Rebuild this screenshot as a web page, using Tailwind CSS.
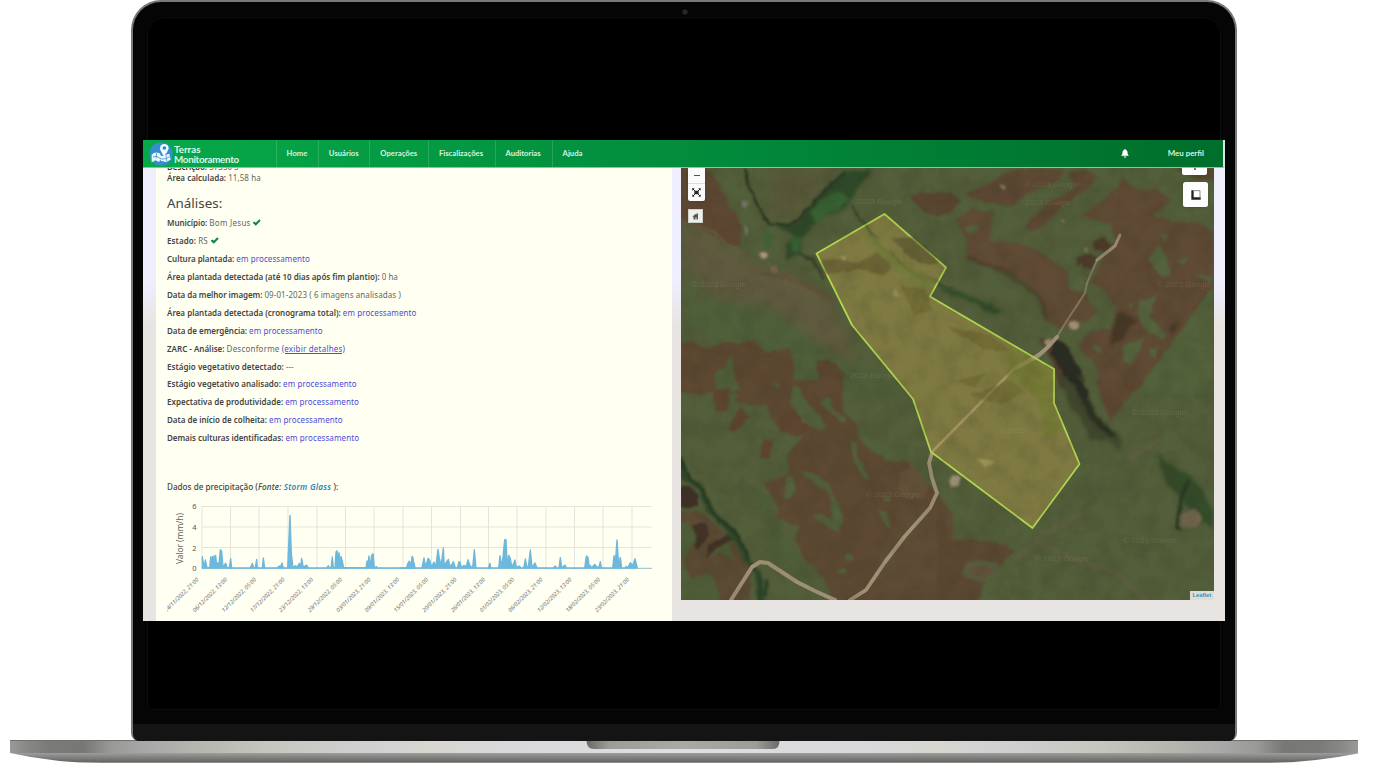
<!DOCTYPE html>
<html lang="pt-BR">
<head>
<meta charset="utf-8">
<title>Terras Monitoramento</title>
<script src="https://cdn.jsdelivr.net/npm/@tailwindcss/browser@4"></script>
</head>
<body class="bg-white">
<div class="flex h-[769px] w-[1373px] flex-col overflow-hidden">
  <!-- laptop lid -->
  <div class="relative ml-[131px] h-[741px] w-[1105.5px] shrink-0 overflow-hidden rounded-t-[30px] rounded-b-[8px] border-x-2 border-t-2 border-[#777977] bg-[#050505]">
    <div class="absolute top-[15px] left-[14px] h-[693px] w-[1074px] rounded-t-[18px] rounded-b-[5px] border border-[#0d0d0d] bg-black"></div>
    <div class="absolute top-[7px] left-[549px] size-[6px] rounded-full border border-[#1a1c1e] bg-[#26292b]"></div>
    <div class="absolute bottom-0 left-0 h-[17px] w-full bg-[#141414]"></div>

    <!-- application screen -->
    <div class="relative mt-[138px] ml-[10px] flex h-[481px] w-[1082px] flex-col overflow-hidden bg-[#e8e4e1]">
      <nav class="flex h-[28px] shrink-0 items-stretch border-r-2 border-b border-r-[#d9e5da] border-b-[#8ac69b] bg-linear-to-r from-[#06a949] via-[#028c3c] to-[#006e2c] text-[7.7px] font-bold text-[#d8f2e0]" style="font-family:Lato,'Liberation Sans',sans-serif">
        <div class="flex w-[132.5px] items-center">
          <svg class="ml-[5.5px] h-[24px] w-[24px] shrink-0" viewBox="0 0 72 72">
            <circle cx="36" cy="36" r="35" fill="#368dcc"/>
            <path d="M8 38q10-10 24-4l6 12-8 14-10-5-12 6z M35 43l12-3 14-5 4 18-14 7-16-4z" fill="#e9fbff"/>
            <path d="M12 45q10-6 20 3 12 8 30-4M23 33l-2 16M51 40l2 17" fill="none" stroke="#4395c6" stroke-width="2.500"/>
            <path d="M45 43Q34 28 33 19a13 13 0 0 1 26 0Q57 30 45 43z" fill="#f2fcff"/>
            <circle cx="46" cy="18" r="5.500" fill="#278cc5"/>
          </svg>
          <div class="ml-[1.5px] text-[9.8px] leading-[10px] font-bold text-[#dcf8e8]"><div>Terras</div><div class="tracking-[-0.03em]">Monitoramento</div></div>
        </div>
        <div class="flex w-[42px] items-center justify-center border-l border-white/15">Home</div>
        <div class="flex w-[51.5px] items-center justify-center border-l border-white/15">Usuários</div>
        <div class="flex w-[58.5px] items-center justify-center border-l border-white/15">Operações</div>
        <div class="flex w-[67px] items-center justify-center border-l border-white/15 pr-px">Fiscalizações</div>
        <div class="flex w-[57px] items-center justify-center border-l border-white/15 pr-px">Auditorias</div>
        <div class="flex w-[41px] items-center justify-center border-l border-white/15">Ajuda</div>
        <div class="ml-auto flex items-center pr-[19px]">
          <svg class="mr-[39px] h-[9px] w-[8px]" viewBox="0 0 24 28" fill="#fff"><path d="M12 0c2 0 2 2 2 2 5 1 6 5 6 10 0 5 2 6 4 9H0c2-3 4-4 4-9C4 7 5 3 10 2c0 0 0-2 2-2zM8 23h8c0 5-8 5-8 0z"/></svg>
          <span class="text-[7.9px]">Meu perfil</span>
        </div>
      </nav>

      <main class="flex min-h-0 flex-1 items-stretch bg-linear-to-b from-[#eeeeff] from-25% to-[#e8e4e1] to-35%">
        <div class="w-[13px] shrink-0"></div>
        <section class="w-[516px] shrink-0 overflow-hidden bg-[#fffff2] pl-[11px] text-[8px] text-[#666]" style="font-family:'Noto Sans','Open Sans',sans-serif">
          <div class="-mt-[7px] h-[8px] leading-[12px] font-semibold whitespace-nowrap text-[#333]">Descrição: <span class="font-normal text-[#626262]">57350 S</span></div>
          <div class="h-[18px] leading-[18px]"><b class="font-semibold text-[#444]">Área calculada:</b> <span class="tracking-[0.01em]">11,58 ha</span></div>
          <h2 class="h-[27px] pt-[3px] text-[13.4px] leading-[26px] text-[#444]">Análises:</h2>
          <div class="flex flex-col whitespace-nowrap [&_b]:font-semibold [&_b]:text-[#444] [&_i]:tracking-[0.012em] [&_i]:text-[#4b4bd8] [&_i]:not-italic [&>div]:h-[17.95px] [&>div]:leading-[18.4px]">
            <div><b class="tracking-[-0.005em]">Município:</b> <span class="tracking-[0.035em]">Bom Jesus</span> <svg class="-ml-px inline h-[7px] w-[9px] -translate-y-px" viewBox="0 0 24 20"><path d="M1 11l5-4 4 4L20 1l4 4-14 14z" fill="#15803f"/></svg></div>
            <div><b class="tracking-[0.01em]">Estado:</b> <span>RS</span> <svg class="inline h-[7px] w-[9px] -translate-y-px" viewBox="0 0 24 20"><path d="M1 11l5-4 4 4L20 1l4 4-14 14z" fill="#15803f"/></svg></div>
            <div><b class="tracking-[-0.004em]">Cultura plantada:</b> <i>em processamento</i></div>
            <div><b>Área plantada detectada (até 10 dias após fim plantio):</b> <span>0 ha</span></div>
            <div><b class="tracking-[-0.008em]">Data da melhor imagem:</b> <span class="tracking-[0.011em]">09-01-2023 ( 6 imagens analisadas )</span></div>
            <div><b>Área plantada detectada (cronograma total):</b> <i>em processamento</i></div>
            <div><b class="tracking-[-0.005em]">Data de emergência:</b> <i>em processamento</i></div>
            <div><b>ZARC - Análise:</b> <span class="tracking-[0.026em]">Desconforme</span> <i class="!tracking-[0.026em] underline">(exibir detalhes)</i></div>
            <div><b class="tracking-[0.004em]">Estágio vegetativo detectado:</b> <span>---</span></div>
            <div><b>Estágio vegetativo analisado:</b> <i>em processamento</i></div>
            <div><b>Expectativa de produtividade:</b> <i>em processamento</i></div>
            <div><b class="tracking-[-0.002em]">Data de início de colheita:</b> <i>em processamento</i></div>
            <div><b class="tracking-[-0.004em]">Demais culturas identificadas:</b> <i>em processamento</i></div>
          </div>
          <div class="mt-[30px] h-[18px] text-[8.15px] leading-[19px] font-medium whitespace-nowrap text-[#444]">Dados de precipitação (<em class="tracking-[0.02em]">Fonte: <span class="font-semibold tracking-[0.03em] text-[#3286b5]">Storm Glass</span></em> ):</div>
          <svg class="block h-[126px] w-[505px]" viewBox="167 495 505 126" font-family="'Noto Sans',sans-serif">
            <path d="M202 506.500H652M202 527H652M202 547.500H652M202 506v64M230.500 506v64M259 506v64M288 506v64M317 506v64M345.500 506v64M374 506v64M403 506v64M431.500 506v64M460.500 506v64M488.500 506v64M517 506v64M546 506v64M574.500 506v64M603 506v64M632 506v64" fill="none" stroke="#deded3" stroke-width=".8"/>
            <path d="M202 568.300H652" stroke="#8fbdcc" stroke-width="1"/>
            <g font-size="7.500" fill="#555" text-anchor="end"><text x="196.500" y="509">6</text><text x="196.500" y="530">4</text><text x="196.500" y="550.500">2</text><text x="196.500" y="571">0</text></g>
            <text transform="translate(182.500 538.500) rotate(-90)" font-size="8.500" fill="#666" text-anchor="middle" textLength="51">Valor (mm/h)</text>
            <g fill="#6db8dc" stroke="#6db8dc" stroke-width="4" stroke-linejoin="round">
              <path transform="translate(140 470) scale(.33333)" d="M187 294V260L192 292 196 270 201 293H209L212 261 215 285 217 259 220 290 222 257 224 287 227 256 230 288 233 278 236 292 241 239 245 244 249 293 257 279 261 293H268L272 266 275 294H331L337 280 341 293H346L350 268 352 294H367L370 264 374 294H410L418 288 421 292 426 279 430 294H443L450 136 454 250 459 293 466 287 470 292 478 280 482 290 485 265 490 292 500 285 505 294H560L565 287 568 294H573L577 261 580 294H585L588 246 591 242 595 270 597 248 600 280 603 259 606 270 611 293H678L681 273 684 282 687 258 691 289 695 256 699 251 703 293 710 290V294H800L803 282 808 274 812 291 817 259 825 294z"/>
              <path transform="translate(400 470) scale(.33333)" d="M0 294H20L27 274 31 290 37 259 44 294H66L72 264 77 291 84 265 89 270 94 291 102 276 107 291 114 238 119 270 123 285 126 266 130 234 133 290 138 278 145 268 151 292 160 275 166 293 173 292 176 276 180 276 184 293 192 286 198 291 204 269 211 289 218 292 223 239 228 294H265L270 280 272 294H296L300 257 306 292 314 209 318 209 322 292 326 256 331 266 336 292 345 270 349 292 358 288 363 294H371L376 267 381 292 385 290 391 240 396 292 405 279 411 294H460L466 288 470 294H477L481 263 485 293 495 285 499 294H554L559 258 564 262 568 291 571 286 574 294 584 283 592 292 597 290 601 275 604 294H638L642 257 646 280 651 210 656 285 661 262 665 294H675L679 289 683 294 691 278 698 287 705 266 712 294z"/>
            </g>
            <g font-size="5.700" font-style="italic" fill="#6c6c6c" text-anchor="end">
              <text transform="translate(199 580) rotate(-45)">14/11/2022, 21:00</text><text transform="translate(227.500 580) rotate(-45)">06/12/2022, 13:00</text><text transform="translate(256.500 580) rotate(-45)">12/12/2022, 05:00</text><text transform="translate(285 580) rotate(-45)">17/12/2022, 21:00</text><text transform="translate(313.500 580) rotate(-45)">23/12/2022, 13:00</text><text transform="translate(342.500 580) rotate(-45)">29/12/2022, 05:00</text><text transform="translate(371 580) rotate(-45)">03/01/2023, 21:00</text><text transform="translate(399.500 580) rotate(-45)">09/01/2023, 13:00</text><text transform="translate(428.500 580) rotate(-45)">15/01/2023, 05:00</text><text transform="translate(457 580) rotate(-45)">20/01/2023, 21:00</text><text transform="translate(485.500 580) rotate(-45)">26/01/2023, 13:00</text><text transform="translate(514.500 580) rotate(-45)">01/02/2023, 05:00</text><text transform="translate(543 580) rotate(-45)">06/02/2023, 21:00</text><text transform="translate(572 580) rotate(-45)">12/02/2023, 13:00</text><text transform="translate(600.500 580) rotate(-45)">18/02/2023, 05:00</text><text transform="translate(629.500 580) rotate(-45)">23/02/2023, 21:00</text>
            </g>
          </svg>
        </section>

        <section class="relative ml-[9px] h-[432px] w-[533px] shrink-0 overflow-hidden bg-[#505d38]">
          <svg class="block h-full w-full" viewBox="681 168 533 432" preserveAspectRatio="none">
            <defs>
              <filter id="soft" x="-5%" y="-5%" width="110%" height="110%" color-interpolation-filters="sRGB"><feTurbulence type="fractalNoise" baseFrequency=".09" numOctaves="3" seed="4" result="n"/><feDisplacementMap in="SourceGraphic" in2="n" scale="5" xChannelSelector="R" yChannelSelector="G"/><feGaussianBlur stdDeviation=".8"/></filter>
              <filter id="grain" x="0" y="0" width="100%" height="100%" color-interpolation-filters="sRGB"><feTurbulence type="fractalNoise" baseFrequency=".05" numOctaves="5" seed="9"/><feColorMatrix values="0 0 0 0 .18  0 0 0 0 .17  0 0 0 0 .1  1.600 0 0 0 -.62"/></filter>
              <filter id="haze" color-interpolation-filters="sRGB"><feGaussianBlur stdDeviation="14"/></filter>
              <filter id="river" x="-20%" y="-20%" width="140%" height="140%" color-interpolation-filters="sRGB"><feGaussianBlur stdDeviation="5"/></filter>
            </defs>
            <rect x="681" y="168" width="533" height="432" fill="#535e3a"/>
            <g filter="url(#soft)">
              <g transform="translate(670 160) scale(.33333)">
                <g filter="url(#haze)">
                  <path d="M30 170L240 300 480 420 560 600 420 560 120 400 30 300z" fill="#605b40"/>
                  <path d="M30 400L300 440 520 600 700 700H400L30 500z" fill="#4f5f3a"/>
                  <path d="M300 30H500L400 170 300 180z" fill="#58593a"/>
                </g>
                <path d="M30 20H105L145 70 165 110 210 190 213 262 180 255 90 205 30 170z" fill="#5e4833"/>
                <path d="M720 108L760 100H850V160L810 168 760 155z" fill="#5a4632"/>
                <path d="M30 545L70 545 105 570 165 545 200 550 250 540 285 575 360 562 372 620 375 700H30z" fill="#5d4832"/>
                <path d="M135 700L135 640 165 620 185 585 192 610 188 640 210 690z" fill="#4f5e38"/>
                <path d="M440 700L445 605 470 598 500 612 522 640 520 700z" fill="#5b4731"/>
                <path d="M265 520L330 495 400 535 360 562 285 575z" fill="#50603b"/>
                <g filter="url(#river)">
                  <path d="M300 190L360 198 400 165 430 120 470 80 520 30H610L560 90 530 145 440 180 395 240 388 280 350 300 345 260 370 230 350 210 310 195" fill="#2f4829"/>
                  <path d="M420 150L460 115 520 90 540 120 500 150 430 185z M365 225L395 235 380 275 360 270z M285 210L305 225 300 265 285 260z" fill="#386232"/>
                </g>
                <path d="M222 28L230 60 260 130 280 175 300 190 360 195 400 165 460 95 525 35" fill="none" stroke="#293621" stroke-width="7"/>
                <path d="M545 135L565 175 590 195 620 250 660 275 700 320 740 345 780 370 850 385" fill="none" stroke="#36432a" stroke-width="6"/>
                <path d="M385 280L430 300 460 355" fill="none" stroke="#36432a" stroke-width="9"/>
                <path d="M30 175L130 215 200 270 250 330 350 370 480 420" fill="none" stroke="#6a5943" stroke-width="6"/>
                <path d="M270 340L350 350 440 390 500 430" fill="none" stroke="#63523d" stroke-width="13"/>
                <path d="M30 470L100 400 160 390M40 500L120 560" fill="none" stroke="#5f5b40" stroke-width="4"/>
                <circle cx="282" cy="287" r="11" fill="#a99679"/><circle cx="315" cy="328" r="10" fill="#7a6851"/>
                <path d="M218 120l15 3-3 22-12-4zM222 195l12 5 2 30-12-10z" fill="#777568"/>
              </g>
              <g transform="translate(670 380) scale(.33333)">
                <path d="M210 30L250 0H515L520 95 545 120 560 130 565 180 600 205 650 245 700 240 750 280 790 330 850 400V680H560L480 650 460 590 430 560 400 530 380 480 385 440 320 415 325 380 280 310 320 300 360 280 350 230 400 170 320 140 290 80 200 70z" fill="#5d4933"/>
                <path d="M130 30L180 25 170 95 135 90zM210 85L240 105 195 158 172 145zM285 180L310 180 300 235 270 230zM330 110L370 85 400 110 420 145 380 170 330 150z" fill="#5e4531"/>
                <path d="M370 20L390 20 405 65 440 95 470 140 445 150 400 130 360 70zM455 70L470 50 485 60 490 90 530 115 520 130 480 100zM535 180L560 185 560 225 580 260 600 295 580 300 565 270 545 220zM345 290L370 290 375 330 360 358 345 350zM390 268L430 275 470 310 510 370 520 420 505 455 520 468 490 450 430 410 450 400 485 425 480 340 430 310zM620 385L650 395 660 440 675 455 650 440zM640 350l20 0 0 18-18-3zM525 525l20-5 5 20-25 5zM505 562l25 5 5 18-30-8zM300 10l35 5-15 12z" fill="#53613c"/>
                <path d="M700 370L850 400V600L600 640 640 500z" fill="#625039" opacity=".5"/>
                <path d="M30 325L60 320 85 345 80 380 45 385 30 375z" fill="#3f3026"/>
                <path d="M30 390L100 400 175 470 240 560 240 670 100 680 30 520z" fill="#5b4a34"/>
                <path d="M70 435L110 430 120 465 80 510z M110 500l60-40 20 15-80 60z" fill="#423227"/>
                <path d="M30 430l30-10 20 60-50 70zM110 530l70-50 10 60-40-20zM50 590l80-5 20 80-110 10z" fill="#4e5d37"/>
                <path d="M30 245L45 295 90 320 120 390 160 430 200 480 235 545 265 580 275 670" fill="none" stroke="#2c4428" stroke-width="17" filter="url(#river)"/>
                <path d="M30 230L60 295 100 330 130 400 205 470 240 540" fill="none" stroke="#253a22" stroke-width="8"/>
                <path d="M265 590L275 640 275 670M290 600L285 650" fill="none" stroke="#29452a" stroke-width="9"/>
                <path d="M250 320L300 350 320 420 400 560 450 640 400 620 320 560 280 440z" fill="#4f5d38"/>
                <path d="M690 300a45 40 0 1 0 80 0a40 40 0 1 0-80 0" fill="#6a5740" opacity=".6"/>
                <path d="M740 210l30-5 15 100-20 5-30-50z" fill="#4f5a38"/>
              </g>
              <g transform="translate(940 160) scale(.33333)">
                <path d="M75 105L160 60 210 30 300 25 375 30 350 65 260 100 215 138 150 130z" fill="#5d4834"/>
                <path d="M390 35L440 25 467 55 440 90 400 115 300 205 260 210 258 195 330 125 400 90z" fill="#5c4833"/>
                <path d="M-10 105L30 95 60 125 20 160-10 170zM700 25H830V60L780 60z" fill="#584530"/>
                <path d="M50 180L95 150 158 155 155 215 145 240 220 250 290 265 330 300 385 340 385 385 430 400 470 450 440 485 350 505 315 475 300 420 250 360 190 330 80 300 80 250z" fill="#604b36"/>
                <path d="M80 295L190 330 250 370 300 420 320 480" fill="none" stroke="#463a2b" stroke-width="7" filter="url(#river)"/>
                <path d="M425 170L530 85 545 50 600 95 650 85 690 120 640 170 700 185 780 190 820 215V380L590 690H490L470 620 415 560 450 515 540 505 545 470 500 400 455 365 480 310 530 240 510 190z" fill="#5f4a35"/>
                <path d="M405 295l40-15 30 15-20 30-45-5zM460 240l30-8 25 20-20 25-30-8z" fill="#4d3b2a"/>
                <path d="M655 250L680 290 690 350 665 350 625 305zM660 220l25 5-15 20zM708 300l35-12-8 28zM755 340l60 10v20zM595 425l55-18-20 60 50 60-10 15-55-35-20-30zM550 560l65-30-40 85-25-10zM450 545l35 20-8 20zM625 570l35-10-15 35zM558 435l20-5-5 18zM525 540l10 10-15 10zM75 200l45-8-20 30-20-5zM385 340l40-30 20 90-55-10z" fill="#54623d"/>
                <path d="M690 500l30-20-20 50zM530 450l60 30-50 60-30 20z" fill="#473727" filter="url(#river)"/>
                <path d="M815 385V700H590z" fill="#53623b"/>
                <path d="M-10 375L60 395 120 420 190 450 160 470 110 430 40 410" fill="#304c2a" filter="url(#river)"/>
                <path d="M300 535L345 540 390 690 360 680 340 620z" fill="#4f3f2e"/>
                <path d="M345 535L385 560 425 640 440 700H390L360 620 330 580z" fill="#2a2d24"/>
                <circle cx="402" cy="497" r="15" fill="#a18d70"/><circle cx="325" cy="545" r="11" fill="#a08b6d"/>
                <path d="M178 75l20 5-5 10zM360 178l15 4-8 7zM430 265l18 3-10 7z" fill="#8a816c"/>
              </g>
              <g transform="translate(940 380) scale(.33333)">
                <path d="M365 -10H430L450 70 480 130 530 160 550 210 500 180 455 180 420 120 380 60z" fill="#40482e" filter="url(#river)"/>
                <path d="M400 -10L430 50 460 110 520 170" fill="none" stroke="#293021" stroke-width="20" filter="url(#river)"/>
                <path d="M390 -10L430 30 430 50" fill="none" stroke="#282c22" stroke-width="22"/>
                <path d="M470 0H605L540 85 512 118 490 80z" fill="#5e4833"/>
                <path d="M650 220L690 255 750 285 780 320 820 390V450L790 430 750 390 720 360 680 310z" fill="#344c2a" filter="url(#river)"/>
                <path d="M750 300L730 340 715 400 710 440 725 450" fill="none" stroke="#2b3a23" stroke-width="10"/>
                <path d="M725 400l40-15 25 30-20 25-45 5z" fill="#736650"/>
                <path d="M-10 370L25 375 20 480 80 475 200 495 225 510 190 550 130 600 110 670H-10z" fill="#5b4833"/>
                <ellipse cx="125" cy="573" rx="58" ry="30" fill="#585d3f"/><ellipse cx="125" cy="575" rx="32" ry="15" fill="#66523c"/>
                <path d="M230 540L300 470 420 400M300 490L420 545 520 570 620 660M560 240L660 180" fill="none" stroke="#5f5e43" stroke-width="13" filter="url(#river)"/>
                <path d="M40 288l18 0 0 32-30-2 0-20z" fill="#a29177"/>
              </g>
            </g>
            <!-- farm roads -->
            <g fill="none" stroke="#a09278" stroke-linecap="round" stroke-linejoin="round">
              <path d="M1120 235L1115 246 1097 260" stroke-width="3" opacity=".9"/>
              <path d="M1097 260L1087 283 1085 293 1066 322 1055 340" stroke-width="2" opacity=".6"/>
              <path d="M1042 352L1014 369 995 388 932 452" stroke-width="2.600" opacity=".9"/>
              <path d="M1057 337L1048 347 1038 356 1016 368" stroke-width="4"/>
              <path d="M932 453L929 463 932 478 937 493 930 508 905 536 885 562 866 590 850 600" stroke-width="3.800"/>
              <path d="M731 600L752 567 760 562 768 563 797 582 815 591 835 600" stroke-width="4"/>
            </g>
            <path d="M884.500 214L946 267.500 930 296.500 1054 369V403L1079.500 464 1032.500 528 931 452 913 399 852 325 816.500 253.500z" fill="#b9a04e" fill-opacity=".44" stroke="#b1d64f" stroke-width="1.800" stroke-linejoin="round"/>
            <g filter="url(#soft)" opacity=".5">
              <path d="M893 239L914 236 940 262 928 266 905 254z" fill="#4a4527"/><path d="M821 259L860 262 880 250 892 265 885 275 855 270 825 275z" fill="#5b4f2a"/>
              <path d="M866 224L880 245 908 269 940 284" stroke="#2f421e" stroke-width="2" fill="none"/>
              <path d="M862 228L878 240 900 262 935 282 925 292 900 275 870 245z" fill="#6c7c36"/>
              <path d="M900 285L925 290 932 310 915 315zM945 325L990 335 1010 350 985 350zM970 395L1010 380 1025 392 1000 405zM955 380l30-6-10 14z" fill="#655e29"/>
              <path d="M1010 345L1052 370V404L1063 430 1045 438 1040 400 1005 375z" fill="#6d7c2c"/>
              <path d="M976 459l20 3-12 6zM894 289l8 8-10-2zM838 256l10 1-4 5z" fill="#b7aa67"/>
            </g>
            <rect x="681" y="168" width="533" height="432" filter="url(#grain)" opacity=".2"/>
            <g font-family="'Liberation Sans',sans-serif" font-size="8" fill="#a9a58c" opacity=".2"><text x="692" y="287">© 2023 Google</text><text x="857" y="204">2023 Google</text><text x="1025" y="187">© 2023 Google</text><text x="1025" y="205">2023 Google</text><text x="1157" y="287">© 2023 Google</text><text x="1132" y="415">© 2023 Google</text><text x="1123" y="543">© 2023 Google</text><text x="1035" y="561">© 2023 Google</text><text x="999" y="433">© 2023</text><text x="866" y="497">© 2023 Google</text><text x="850" y="378">2023 Google</text></g>
          </svg>
          <!-- map controls -->
          <div class="absolute top-0 left-[7px] flex h-[33px] w-[17px] flex-col rounded-b-[2px] bg-[#fbfbfb] shadow">
            <div class="flex h-[16px] items-center justify-center border-b border-[#ddd]"><div class="h-[1.5px] w-[6px] bg-[#555]"></div></div>
            <svg class="m-auto h-[9px] w-[9px]" viewBox="0 0 27 27" fill="#262626"><path d="M7 8h13v11H7zM0 1h8L1 8zM19 1h7v7zM1 19l7 7H1zM26 19v7h-7z"/><path d="M3 3l21 21M24 3L3 24" stroke="#262626" stroke-width="3"/></svg>
          </div>
          <div class="absolute top-[41px] left-[7px] flex h-[14px] w-[15px] items-center justify-center border border-[#cfcfca] bg-[#eeeeec]"><svg class="h-[7px] w-[7px]" viewBox="0 0 14 14" fill="#555"><path d="M1 7l6-5 2 1V1h3v12H9V9H7v4H3V8z"/></svg></div>
          <div class="absolute top-0 right-[7px] flex h-[7px] w-[25px] justify-center rounded-b-[2px] bg-white"><div class="h-[1.5px] w-[2px] bg-[#777]"></div></div>
          <div class="absolute top-[14px] right-[6px] flex h-[25px] w-[25px] items-center justify-center rounded-[2.5px] bg-[#fdfdfd] shadow"><svg class="h-[10px] w-[10px]" viewBox="0 0 30 30"><path d="M1 1h7v21h21v7H1z" fill="#222"/><path d="M8 2h19v20" fill="none" stroke="#777" stroke-width="2.500"/></svg></div>
          <div class="absolute right-0 bottom-0 flex h-[9px] w-[24.5px] items-center justify-center bg-[#d9dfd6] text-[5.8px] leading-none font-bold text-[#3a92c0]" style="font-family:'Liberation Sans',sans-serif">Leaflet</div>
        </section>
      </main>
    </div>
  </div>

  <!-- laptop base -->
  <svg class="-mt-[2px] block h-[30px] w-[1373px] shrink-0" viewBox="0 739 1373 30">
    <defs>
      <linearGradient id="deck" x1="0" x2="1"><stop offset="0" stop-color="#999b98"/><stop offset=".014" stop-color="#868785"/><stop offset=".03" stop-color="#7a7b79"/><stop offset=".055" stop-color="#777875"/><stop offset=".075" stop-color="#999a96"/><stop offset=".1" stop-color="#a7a7a7"/><stop offset=".14" stop-color="#b5b7af"/><stop offset=".19" stop-color="#c5c7bd"/><stop offset=".24" stop-color="#cdcdcc"/><stop offset=".28" stop-color="#d2d2d4"/><stop offset=".31" stop-color="#d7d6cf"/><stop offset=".36" stop-color="#d8d8db"/><stop offset=".5" stop-color="#dfdfe1"/><stop offset=".64" stop-color="#d8d8db"/><stop offset=".69" stop-color="#d7d6cf"/><stop offset=".72" stop-color="#d2d2d4"/><stop offset=".76" stop-color="#cdcdcc"/><stop offset=".81" stop-color="#c5c7bd"/><stop offset=".86" stop-color="#b5b7af"/><stop offset=".9" stop-color="#a7a7a7"/><stop offset=".925" stop-color="#999a96"/><stop offset=".945" stop-color="#777875"/><stop offset=".97" stop-color="#7a7b79"/><stop offset=".986" stop-color="#868785"/><stop offset="1" stop-color="#999b98"/></linearGradient>
      <linearGradient id="under" x2="0" y2="1"><stop offset="0" stop-color="#a4a5a2"/><stop offset=".4" stop-color="#878885"/><stop offset=".9" stop-color="#666764"/><stop offset="1" stop-color="#aaa"/></linearGradient>
      <linearGradient id="notch" x2="1"><stop offset="0" stop-color="#6a6b68"/><stop offset=".12" stop-color="#9c9d96"/><stop offset=".5" stop-color="#a9aaa4"/><stop offset=".88" stop-color="#9c9d96"/><stop offset="1" stop-color="#6a6b68"/></linearGradient>
    </defs>
    <path d="M10 752H1358V753.500Q1310 763 1265 763H103Q55 763 10 753z" fill="url(#under)"/>
    <rect x="10" y="740" width="1348" height="13" fill="url(#deck)"/>
    <path d="M10 740.500H1358" stroke="#6f706e" stroke-width="1"/>
    <path d="M586.500 740.500H779.500Q779.500 749 773 749H594Q586.500 749 586.500 740.500z" fill="url(#notch)"/>
  </svg>
</div>
</body>
</html>
